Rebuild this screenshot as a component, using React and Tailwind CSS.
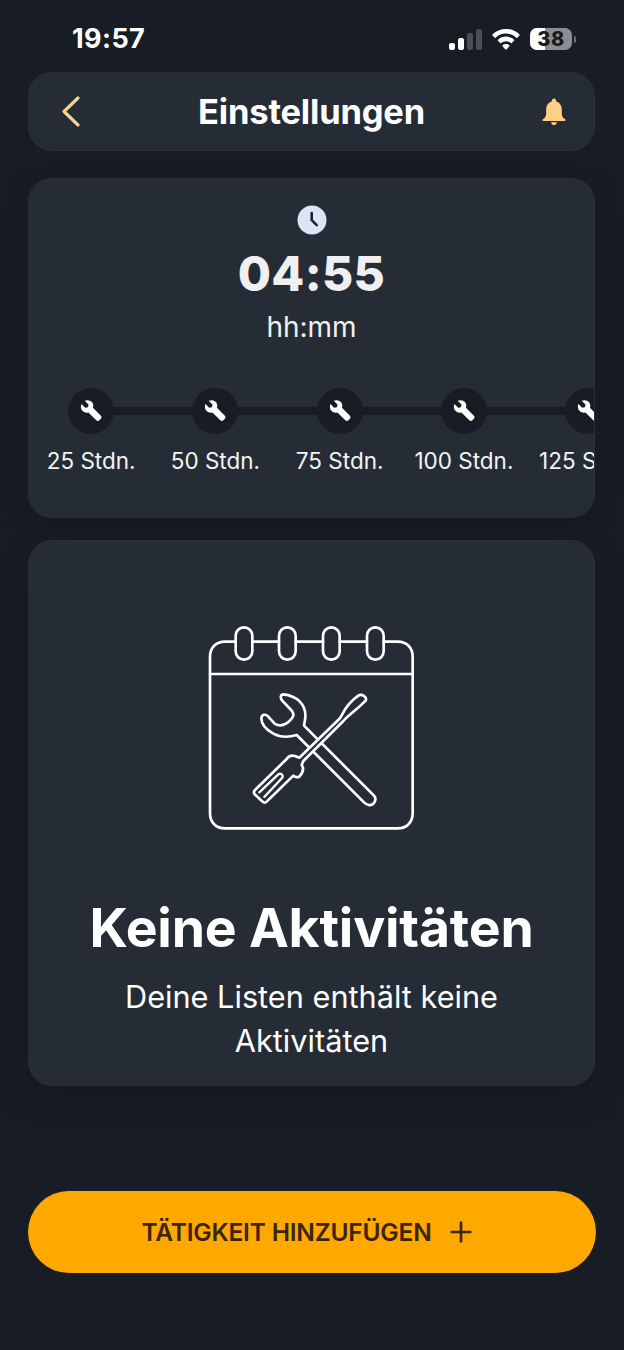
import React from 'react';
import { Plus } from 'lucide-react';

const poppins = { fontFamily: '"Inter", "Noto Sans", sans-serif' };

const milestones = ['25 Stdn.', '50 Stdn.', '75 Stdn.', '100 Stdn.', '125 Stdn.'];

const WrenchIcon = ({ className }) => (
  <svg viewBox="0 0 24 24" className={className} fill="currentColor">
    <path d="M3.2 5.600 6.600 9l2.600-.4.5-2.600L6.200 2.600C8.600 1.400 11.400 2 13 4c1.200 1.500 1.400 3.400.8 5.100l7.300 7.300c.8.8.8 2 0 2.800l-1.400 1.400c-.8.8-2 .8-2.800 0L9.600 13.300c-1.700.6-3.700.3-5.100-1-1.900-1.700-2.400-4.400-1.300-6.700z" />
  </svg>
);

const ClockIcon = () => (
  <svg viewBox="0 0 30 30" className="h-[30px] w-[30px]">
    <circle cx="15" cy="15" r="14.500" fill="#dfe3f6" />
    <path d="M14.700 8v7.200l5 5" fill="none" stroke="#1d232b" strokeWidth="2.600" strokeLinecap="round" strokeLinejoin="round" />
  </svg>
);

const BellIcon = () => (
  <svg viewBox="0 0 26 30" className="h-[30px] w-[26px]" fill="#fdd083">
    <path d="M13 1.500c1.300 0 2.200 1 2.200 2.300v.7c3.600 1 5.600 4 5.600 8v4.500c0 2.200 1.200 3.800 3.400 5.300.8.600.4 1.700-.6 1.700H2.400c-1 0-1.400-1.100-.6-1.700 2.200-1.500 3.400-3.100 3.400-5.300v-4.500c0-4 2-7 5.600-8v-.7c0-1.300.9-2.300 2.200-2.300z" />
    <path d="M10.200 25.200h5.600c0 1.700-1.200 2.900-2.800 2.900s-2.800-1.200-2.800-2.900z" />
  </svg>
);

const BackChevron = () => (
  <svg viewBox="0 0 18 31" className="h-[31px] w-[18px]" fill="none" stroke="#f6d28b" strokeWidth="3.200" strokeLinecap="round" strokeLinejoin="round">
    <path d="M16 2 2 15.500 16 29" />
  </svg>
);

// status bar glyphs
const SignalBars = () => (
  <div className="flex items-end gap-[3px]">
    <span className="h-[7px] w-[6px] rounded-[2px] bg-white" />
    <span className="h-[12px] w-[6px] rounded-[2px] bg-white" />
    <span className="h-[17px] w-[6px] rounded-[2px] bg-[#4a4d52]" />
    <span className="h-[21px] w-[6px] rounded-[2px] bg-[#4a4d52]" />
  </div>
);

const WifiIcon = () => (
  <svg viewBox="0 0 28 21" className="h-[21px] w-[28px]" fill="#fff">
    <path d="M14 0c5.200 0 9.900 2 13.500 5.400.3.300.3.700 0 1l-2.200 2.300c-.3.300-.7.300-1 0C21.600 6.100 18 4.600 14 4.600S6.400 6.100 3.700 8.700c-.3.300-.7.300-1 0L.5 6.400c-.3-.3-.3-.7 0-1C4.100 2 8.800 0 14 0z" />
    <path d="M14 7.600c3.100 0 5.900 1.100 8 3.100.3.300.3.700 0 1l-2.200 2.300c-.3.300-.7.300-1 0-1.300-1.100-3-1.800-4.800-1.800s-3.500.7-4.800 1.800c-.3.300-.7.300-1 0L6 11.700c-.3-.3-.3-.7 0-1 2.100-2 4.900-3.100 8-3.100z" />
    <path d="M14 15c1.300 0 2.500.5 3.400 1.300.3.300.3.700 0 1l-2.900 3.100c-.3.300-.7.300-1 0l-2.900-3.100c-.3-.3-.3-.7 0-1 .9-.8 2.100-1.300 3.400-1.300z" />
  </svg>
);

const Battery = () => (
  <div className="flex items-center gap-[2px]">
    <div className="relative flex h-[22px] w-[42px] items-center justify-center overflow-hidden rounded-[7px] bg-[#8b8d90]">
      <span className="absolute inset-y-0 left-0 w-[15px] bg-white" />
      <span className="relative text-[20px] leading-none font-extrabold tracking-[0.5px] text-[#17191d]">38</span>
    </div>
    <span className="h-[7px] w-[2px] rounded-r-full bg-[#6f7276]" />
  </div>
);

const CalendarTools = () => (
  <svg viewBox="6 0 720 705" className="h-[235px] w-[240px]" fill="none" stroke="#fff" strokeWidth="8" strokeLinecap="round" strokeLinejoin="round">
    {/* calendar sheet */}
    <path d="M137 95H105C78 95 60 113 60 140V610C60 637 78 655 105 655H623C650 655 668 637 668 610V140C668 113 650 95 623 95H581" />
    <path d="M187 95H267M317 95H399M449 95H531" />
    <path d="M60 192H668" />
    {/* binder rings */}
    <rect x="137" y="52" width="50" height="97" rx="25" />
    <rect x="267" y="52" width="50" height="97" rx="25" />
    <rect x="399" y="52" width="50" height="97" rx="25" />
    <rect x="531" y="52" width="50" height="97" rx="25" />
    <g transform="translate(180 225)">
      {/* wrench */}
      <path d="M100 28C140 32 168 58 166 95C165 108 163 116 162 122L372 332C382 344 372 362 356 360C350 359 346 356 342 352L140 150C120 156 92 158 70 146C50 135 34 118 34 100C36 88 46 86 54 94L74 116C86 124 102 122 116 110C130 98 134 90 126 78L96 46C90 38 92 28 100 28Z" />
      {/* screwdriver, filled so it hides the wrench behind it */}
      <path
        d="M270 100C280 85 285 60 325 32C335 25 352 35 347 47C320 75 300 85 280 108L160 228L155 240C162 250 160 262 148 275C140 278 134 276 130 272L50 350C46 354 42 354 38 350L14 328C10 322 12 318 15 315L110 222C115 214 125 210 135 213L148 218Z"
        fill="#252c35"
      />
      <path d="M28 322L85 268C92 262 102 272 96 279L43 336" strokeWidth="7" />
    </g>
  </svg>
);

export default function App() {
  return (
    <div className="flex h-[1350px] w-[624px] flex-col overflow-hidden bg-[#181d25] pl-[28px] text-white" style={poppins}>
      {/* status bar */}
      <div className="flex h-[72px] w-[568px] shrink-0 items-center justify-between pt-[6px] pr-[20px] pl-[44px]">
        <span className="text-[27px] font-bold tracking-[0.4px]">19:57</span>
        <div className="flex items-center gap-[10px]">
          <SignalBars />
          <WifiIcon />
          <Battery />
        </div>
      </div>

      {/* app header */}
      <header className="flex h-[79px] w-[567px] shrink-0 items-center justify-between rounded-[24px] border border-[#2a3039] bg-[#252c35] pr-[27px] pl-[33px]">
        <div className="w-[20px]"><BackChevron /></div>
        <h1 className="text-[34.500px] font-bold tracking-[-0.2px]">Einstellungen</h1>
        <BellIcon />
      </header>

      {/* operating hours */}
      <section className="mt-[27px] flex h-[340px] w-[567px] shrink-0 flex-col items-center overflow-hidden rounded-[24px] border border-[#2a3039] bg-[#252c35] shadow-[0_10px_30px_rgba(0,0,0,0.15)]">
        <div className="mt-[26px]"><ClockIcon /></div>
        <div className="mt-[11px] text-[48px] leading-[56px] font-extrabold tracking-[0.3px] text-[#f0f0f0]">04:55</div>
        <div className="mt-[9px] text-[28px] leading-[32px] font-normal text-[#f0f0f0]">hh:mm</div>

        <div className="mt-[45px] flex w-full">
          {milestones.map((label, i) => (
            <div key={label} className="relative flex w-[124.250px] shrink-0 flex-col items-center">
              {i < milestones.length - 1 && (
                <span className="absolute top-[19px] left-1/2 h-[8px] w-full bg-[#181d25]" />
              )}
              <div className="relative flex h-[46px] w-[46px] items-center justify-center rounded-full bg-[#181d25]">
                <WrenchIcon className="h-[26px] w-[26px] text-white" />
              </div>
              <span className="mt-[13px] text-[22.500px] leading-[28px] whitespace-nowrap text-[#f4f4f4]">{label}</span>
            </div>
          ))}
        </div>
      </section>

      {/* empty activity list */}
      <section className="mt-[22px] flex h-[546px] w-[567px] shrink-0 flex-col items-center rounded-[24px] border border-[#2a3039] bg-[#252c35] shadow-[0_12px_36px_rgba(0,0,0,0.2)]">
        <div className="mt-[69px]"><CalendarTools /></div>
        <h2 className="mt-[51px] text-[53.500px] leading-[64px] font-bold tracking-[-0.2px] whitespace-nowrap">Keine Aktivitäten</h2>
        <p className="mt-[15px] w-[440px] text-center text-[30.700px] leading-[44px] font-normal">Deine Listen enthält keine Aktivitäten</p>
      </section>

      {/* primary action */}
      <button className="mt-[105px] flex h-[82px] w-[568px] shrink-0 items-center justify-center gap-[13px] rounded-full bg-[#ffa900] pr-[6px] text-[#3b2507]">
        <span className="text-[24.500px] font-semibold tracking-[-0.2px]">TÄTIGKEIT HINZUFÜGEN</span>
        <Plus className="h-[32px] w-[32px]" strokeWidth={2} />
      </button>
    </div>
  );
}
